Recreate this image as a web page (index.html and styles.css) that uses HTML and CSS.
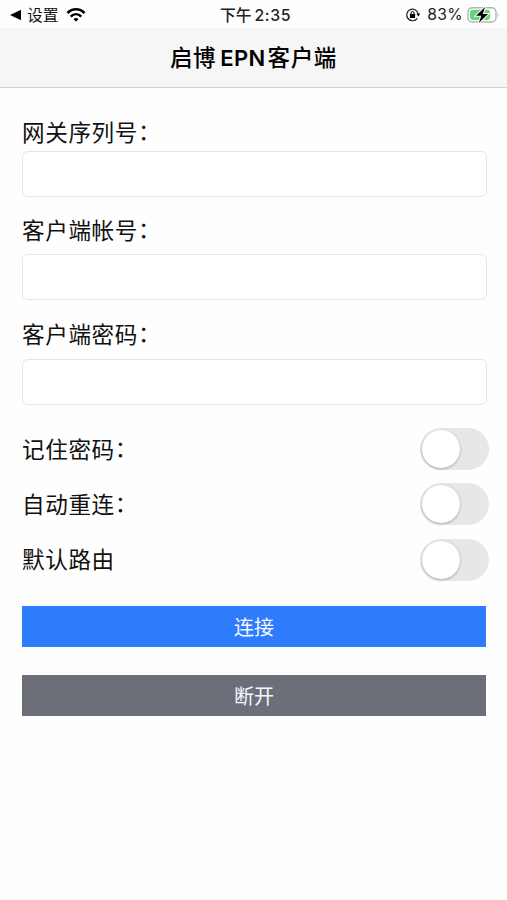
FILE: index.html
```html
<!DOCTYPE html>
<html lang="zh-CN">
<head>
<meta charset="utf-8">
<title>启博EPN客户端</title>
<link rel="stylesheet" href="styles.css">
</head>
<body>
<div class="status">
  <div class="status-left">
    <svg width="12" height="12" viewBox="0 0 12 12"><path d="M0 6 11 .8v10.4z"/></svg>
    <span class="back">设置</span>
    <svg class="wifi" width="20" height="16" viewBox="0 0 22 17"><g fill="none" stroke="#000" stroke-width="2.8"><path d="M1.6 6.3C7 .8 15 .8 20.4 6.3"/><path d="M5.2 10.2C8.6 6.8 13.4 6.8 16.8 10.2"/></g><path d="M8.2 13Q11 10.6 13.8 13L11 15.8z"/></svg>
  </div>
  <div class="time">下午<span>2:35</span></div>
  <div class="status-right">
    <svg width="16" height="16" viewBox="0 0 16 16"><path d="M13.2 6.6A5.8 5.8 0 1 0 12.3 11.3" fill="none" stroke="#222" stroke-width="1.2"/><path d="M11.3 6.6h3.8l-1.6 3z"/><rect x="4.9" y="7" width="5.2" height="4" rx=".6"/><path d="M6 7.5V6a1.5 1.5 0 0 1 3 0v1.5" fill="none" stroke="#000" stroke-width="1"/></svg>
    <span class="percent">83%</span>
    <svg class="battery" width="34" height="18" viewBox="0 0 34 18"><rect x="1" y="1.8" width="28" height="14.2" rx="4.2" fill="#fff" stroke="#b2b5b2" stroke-width="1.4"/><rect x="3" y="3.8" width="20" height="10.2" rx="2.4" fill="#68d27c"/><path d="M30.6 6.4q2 2.5 0 5z" fill="#b2b5b2"/><path d="M18 1 9 9.7h5.3L11.8 17 21 8h-5.2z" fill="#000" stroke="#fff" stroke-width="2" paint-order="stroke"/></svg>
  </div>
</div>
<header class="nav"><h1><span>启博</span><span class="latin">EPN</span><span>客户端</span></h1></header>
<main class="form">
  <label class="label" for="gateway">网关序列号<span class="colon">：</span></label>
  <input class="field" id="gateway" type="text">
  <label class="label account" for="account">客户端帐号<span class="colon">：</span></label>
  <input class="field" id="account" type="text">
  <label class="label password" for="password">客户端密码<span class="colon">：</span></label>
  <input class="field" id="password" type="password">
  <div class="options">
    <div class="option"><span>记住密码<span class="colon">：</span></span><button class="switch" type="button"><i></i></button></div>
    <div class="option"><span>自动重连<span class="colon">：</span></span><button class="switch" type="button"><i></i></button></div>
    <div class="option"><span>默认路由</span><button class="switch" type="button"><i></i></button></div>
  </div>
  <button class="action connect" type="button">连接</button>
  <button class="action disconnect" type="button">断开</button>
</main>
</body>
</html>
```
FILE: styles.css
```css
* { box-sizing: border-box; }
body {
  margin: 0;
  height: 900px;
  overflow: hidden;
  background: #fefefe;
  color: #111;
  font-family: Inter, "Noto Sans CJK SC", sans-serif;
}
svg { display: block; flex: none; }
.status {
  display: grid;
  grid-template-columns: 1fr auto 1fr;
  align-items: center;
  height: 28px;
  padding: 0 6px 1px 10px;
  font-size: 15.8px;
  line-height: 27px;
}
.status-left, .status-right { display: flex; align-items: center; height: 27px; }
.status-right { justify-content: flex-end; }
.back { margin-left: 5px; padding-top: 2px; }
.wifi { margin-left: 7px; }
.time { padding-top: 2px; font-weight: 500; color: #222; }
.time span { margin-left: 3px; letter-spacing: .6px; }
.percent { margin-left: 6px; font-size: 15.7px; letter-spacing: .3px; color: #222; }
.battery { margin-left: 4px; }
.nav {
  display: flex;
  align-items: center;
  justify-content: center;
  height: 60px;
  background: #f6f6f6;
  border-bottom: 1px solid #d2d2d2;
}
h1 {
  display: flex;
  margin: 0;
  font-size: 22.5px;
  font-weight: 500;
  line-height: 32px;
  letter-spacing: .7px;
  color: #000;
}
.latin { margin: 0 2px 0 4px; font-weight: 600; font-size: 22px; letter-spacing: .3px; }
.form { padding: 29px 20px 0 22px; }
.label {
  display: block;
  height: 34px;
  line-height: 30px;
  font-size: 22.6px;
  letter-spacing: .6px;
}
.colon { font-family: "Noto Sans CJK SC", sans-serif; position: relative; top: -1px; }
.field {
  display: block;
  width: 464.5px;
  height: 46px;
  margin: 0;
  padding: 0 12px;
  border: 1.5px solid #e5e5e6;
  border-radius: 6px;
  background: #fff;
  font: inherit;
  font-size: 20px;
}
.account { margin-top: 18px; height: 39px; }
.password { margin-top: 19px; height: 40px; }
.options { margin-top: 16px; }
.option {
  display: flex;
  align-items: center;
  justify-content: space-between;
  height: 55.5px;
  font-size: 22.6px;
  line-height: 30px;
  letter-spacing: .6px;
}
.option > span { padding-top: 1px; }
.switch {
  display: flex;
  align-items: center;
  width: 69px;
  height: 42px;
  padding: 0 2px;
  border: 0;
  border-radius: 21px;
  background: #e7e7e9;
  margin-right: -2px;
}
.switch i {
  width: 38px;
  height: 38px;
  border-radius: 50%;
  background: #fff;
  box-shadow: 0 1px 3px rgba(0, 0, 0, .28);
}
.action {
  display: block;
  width: 464px;
  height: 41px;
  margin: 0;
  padding: 0;
  border: 0;
  color: #f4f7ff;
  font: 20px/41px "Noto Sans CJK SC", sans-serif;
}
.connect { margin-top: 18px; background: #2e7bfc; }
.disconnect { margin-top: 28px; background: #6c6f78; }
```
